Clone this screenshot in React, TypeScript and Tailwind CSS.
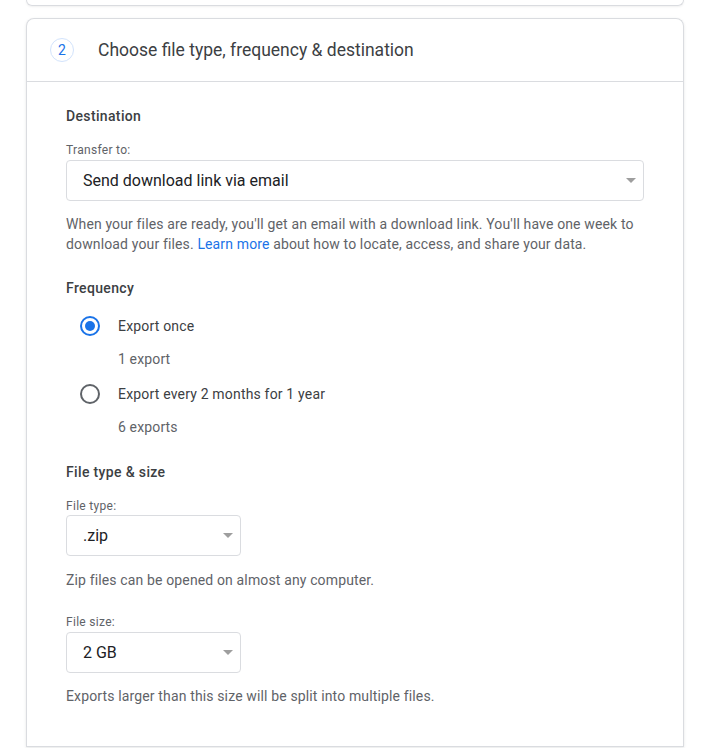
import React from "react";

function Select({ value, width }: { value: string; width: string }) {
  return (
    <div
      className={`${width} h-[41px] flex items-center justify-between border border-[#dadce0] rounded-[4px] bg-white pl-[16px] pr-[7px]`}
    >
      <span className="text-[16px] text-[#202124]">{value}</span>
      <span className="w-0 h-0 border-l-[5px] border-r-[5px] border-t-[5px] border-l-transparent border-r-transparent border-t-[#9e9e9e]" />
    </div>
  );
}

function Radio({ checked, label, sub, className = "" }: { checked: boolean; label: string; sub: string; className?: string }) {
  return (
    <div className={className}>
      <div className="flex items-center h-[20px] pl-[14px]">
        <span
          className={`w-[20px] h-[20px] rounded-full border-2 flex items-center justify-center ${
            checked ? "border-[#1a73e8]" : "border-[#5f6368]"
          }`}
        >
          {checked && <span className="w-[10px] h-[10px] rounded-full bg-[#1a73e8]" />}
        </span>
        <span className="ml-[18px] text-[14px] leading-[20px] tracking-[0.18px] text-[#3c4043]">{label}</span>
      </div>
      <div className="mt-[13px] pl-[52px] text-[14px] leading-[20px] tracking-[0.14px] text-[#5f6368]">{sub}</div>
    </div>
  );
}

export default function App() {
  return (
    <div className="w-[716px] h-[748px] overflow-hidden bg-white font-['Roboto',sans-serif]">
      {/* previous step card, bottom edge */}
      <div className="ml-[26px] w-[658px] h-[6px] border border-t-0 border-[#dadce0] rounded-b-lg shadow-[0_1px_2px_rgba(60,64,67,0.08)]" />

      {/* step 2 */}
      <div className="mt-[12px] ml-[26px] w-[658px] border border-[#dadce0] border-b-0 rounded-t-lg shadow-[0_1px_3px_rgba(60,64,67,0.12)]">
        <div className="h-[63px] flex items-center pl-[23px] border-b border-[#dadce0]">
          <span className="w-[24px] h-[24px] rounded-full border border-[#d2e3fc] flex items-center justify-center text-[14px] text-[#1a73e8]">
            2
          </span>
          <span className="ml-[24px] text-[17.5px] text-[#3c4043]">Choose file type, frequency &amp; destination</span>
        </div>

        <div className="px-[39px] pt-[24px] pb-[40px] border-b border-[#dadce0]">
          <div className="text-[14px] leading-[20px] font-medium tracking-[0.35px] text-[#3c4043]">Destination</div>
          <div className="mt-[16px] text-[12px] leading-[16px] tracking-[0.3px] text-[#5f6368]">Transfer to:</div>
          <div className="mt-[2px]">
            <Select value="Send download link via email" width="w-[578px]" />
          </div>
          <p className="mt-[13px] text-[14px] leading-[20px] tracking-[0.14px] text-[#5f6368]">
            When your files are ready, you'll get an email with a download link. You'll have one week to download
            your files. <span className="text-[#1a73e8]">Learn more</span> about how to locate, access, and share
            your data.
          </p>

          <div className="mt-[24px] text-[14px] leading-[20px] font-medium tracking-[0.35px] text-[#3c4043]">Frequency</div>
          <Radio className="mt-[18px]" checked label="Export once" sub="1 export" />
          <Radio className="mt-[15px]" checked={false} label="Export every 2 months for 1 year" sub="6 exports" />

          <div className="mt-[25px] text-[14px] leading-[20px] font-medium tracking-[0.35px] text-[#3c4043]">File type &amp; size</div>
          <div className="mt-[16px] text-[12px] leading-[16px] tracking-[0.3px] text-[#5f6368]">File type:</div>
          <div className="mt-[1px]">
            <Select value=".zip" width="w-[175px]" />
          </div>
          <p className="mt-[14px] text-[14px] leading-[20px] tracking-[0.14px] text-[#5f6368]">Zip files can be opened on almost any computer.</p>

          <div className="mt-[24px] text-[12px] leading-[16px] tracking-[0.3px] text-[#5f6368]">File size:</div>
          <div className="mt-[2px]">
            <Select value="2 GB" width="w-[175px]" />
          </div>
          <p className="mt-[13px] text-[14px] leading-[20px] tracking-[0.14px] text-[#5f6368]">
            Exports larger than this size will be split into multiple files.
          </p>
        </div>
      </div>
    </div>
  );
}
